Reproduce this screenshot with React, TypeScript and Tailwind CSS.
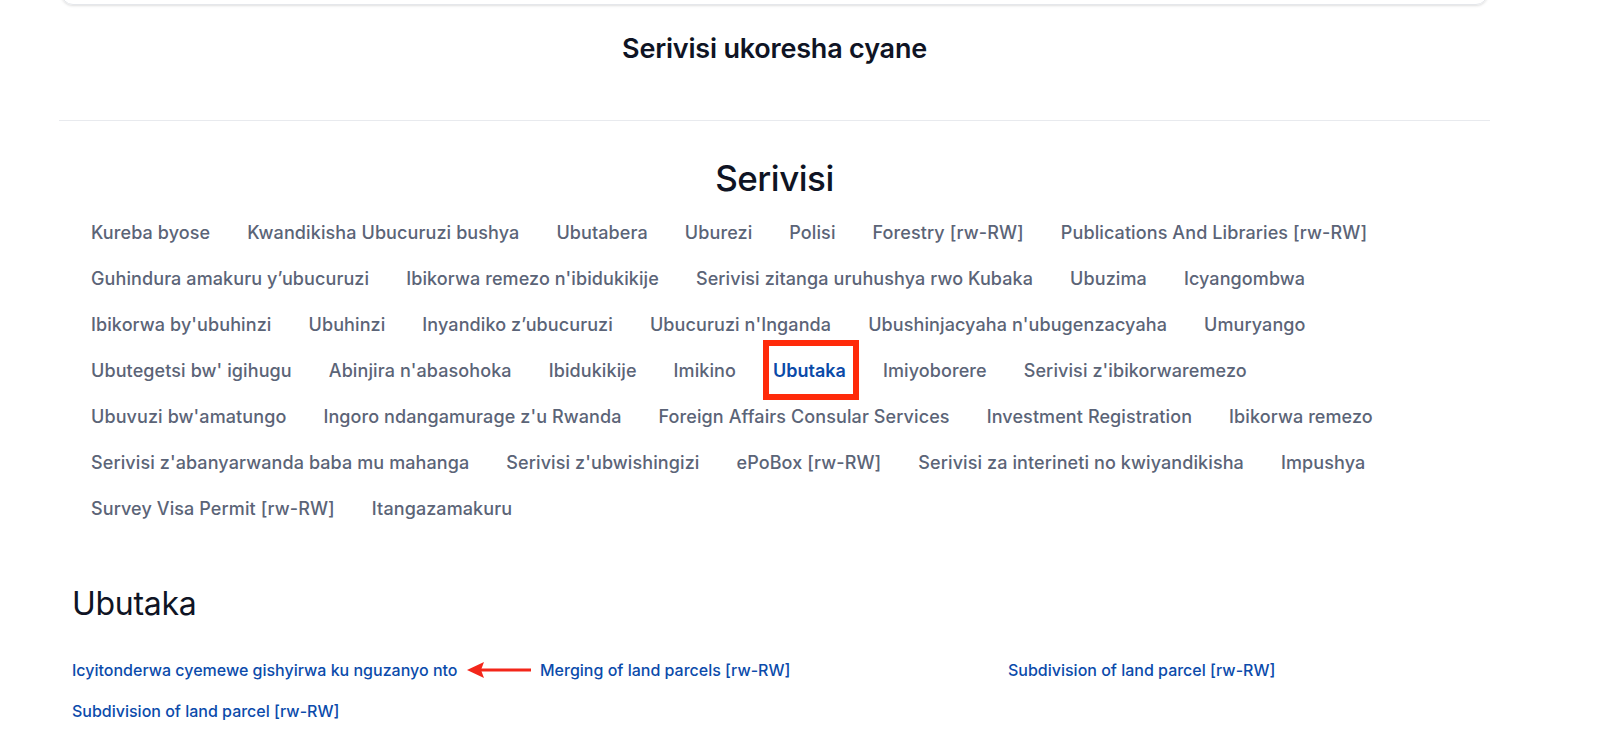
import React from "react";

const rows: string[][] = [
  ["Kureba byose", "Kwandikisha Ubucuruzi bushya", "Ubutabera", "Uburezi", "Polisi", "Forestry [rw-RW]", "Publications And Libraries [rw-RW]"],
  ["Guhindura amakuru y’ubucuruzi", "Ibikorwa remezo n'ibidukikije", "Serivisi zitanga uruhushya rwo Kubaka", "Ubuzima", "Icyangombwa"],
  ["Ibikorwa by'ubuhinzi", "Ubuhinzi", "Inyandiko z’ubucuruzi", "Ubucuruzi n'Inganda", "Ubushinjacyaha n'ubugenzacyaha", "Umuryango"],
  ["Ubutegetsi bw' igihugu", "Abinjira n'abasohoka", "Ibidukikije", "Imikino", "Ubutaka", "Imiyoborere", "Serivisi z'ibikorwaremezo"],
  ["Ubuvuzi bw'amatungo", "Ingoro ndangamurage z'u Rwanda", "Foreign Affairs Consular Services", "Investment Registration", "Ibikorwa remezo"],
  ["Serivisi z'abanyarwanda baba mu mahanga", "Serivisi z'ubwishingizi", "ePoBox [rw-RW]", "Serivisi za interineti no kwiyandikisha", "Impushya"],
  ["Survey Visa Permit [rw-RW]", "Itangazamakuru"],
];

function Arrow() {
  return (
    <svg width="66" height="18" viewBox="0 0 66 18" className="absolute left-[395px] top-1/2 -translate-y-1/2">
      <line x1="12" y1="9" x2="64" y2="9" stroke="#f3261a" strokeWidth="3" />
      <polygon points="0,9 17,1 14,9 17,17" fill="#f3261a" />
    </svg>
  );
}

export default function App() {
  return (
    <div className="h-[752px] w-full overflow-hidden bg-white font-['Inter',sans-serif]">
      <div className="ml-[59px] w-[1431px]">
        <div className="mx-[2px] -mt-[20px] h-[25px] rounded-xl border border-gray-200 shadow-sm" />
        <h2 className="mt-[28px] text-center text-[27px] font-semibold leading-[32px] tracking-[-0.2px] text-[#0f1424]">
          Serivisi ukoresha cyane
        </h2>
        <div className="mt-[55px] border-t border-[#e8eaee]" />
        <h1 className="mt-[35px] text-center text-[35px] font-medium leading-[44px] tracking-[-0.5px] text-[#0f1424]">
          Serivisi
        </h1>
        <div className="mt-[9px] pl-[32px]">
          {rows.map((row, i) => (
            <div key={i} className="flex h-[46px] items-center gap-x-[37px]">
              {row.map((item) => {
                const active = item === "Ubutaka";
                return (
                  <span
                    key={item}
                    className={
                      active
                        ? "relative flex h-full items-center text-[18px] font-semibold tracking-[0px] text-[#0a4aa8]"
                        : "flex h-full items-center whitespace-nowrap text-[18px] font-medium tracking-[0.1px] text-[#5b6477]"
                    }
                  >
                    {item}
                    {active && (
                      <span className="pointer-events-none absolute -bottom-[7px] -left-[10px] -right-[13px] -top-[7px] border-[6px] border-[#ff2a0a]" />
                    )}
                  </span>
                );
              })}
            </div>
          ))}
        </div>
        <div className="mt-[53px] pl-[13px]">
          <h3 className="text-[32px] font-normal leading-[40px] tracking-[-0.3px] text-[#0f1424]">Ubutaka</h3>
          <div className="mt-[25px] grid w-[1404px] grid-cols-3">
            <div className="relative flex h-[41px] items-center">
              <a className="text-[16px] font-medium text-[#0b4bab]">Icyitonderwa cyemewe gishyirwa ku nguzanyo nto</a>
              <Arrow />
            </div>
            <div className="flex h-[41px] items-center">
              <a className="text-[16px] font-medium text-[#0b4bab]">Merging of land parcels [rw-RW]</a>
            </div>
            <div className="flex h-[41px] items-center">
              <a className="text-[16px] font-medium text-[#0b4bab]">Subdivision of land parcel [rw-RW]</a>
            </div>
            <div className="flex h-[41px] items-center">
              <a className="text-[16px] font-medium text-[#0b4bab]">Subdivision of land parcel [rw-RW]</a>
            </div>
          </div>
        </div>
      </div>
    </div>
  );
}
